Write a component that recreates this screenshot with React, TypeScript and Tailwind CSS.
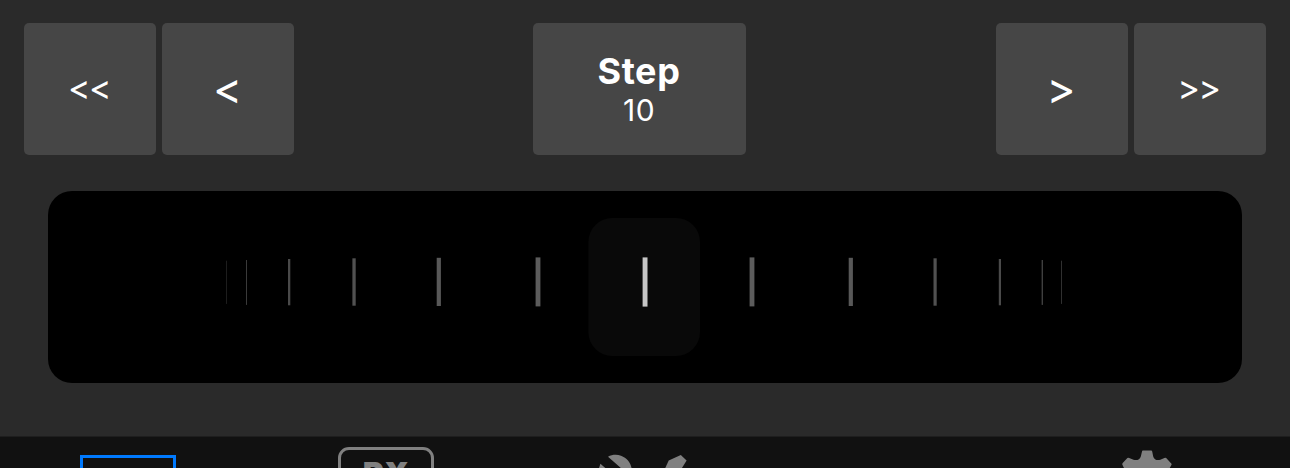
import type { ReactNode } from "react";

type Tick = { x: number; w: number; y: number; h: number; fill: string };

const ticks: Tick[] = [
  { x: 226, w: 1, y: 260.7, h: 43.2, fill: "#1d1d1d" },
  { x: 246, w: 1, y: 260, h: 44.9, fill: "#3a3a3a" },
  { x: 288, w: 2.3, y: 259, h: 46.3, fill: "#4a4a4a" },
  { x: 352.4, w: 3.3, y: 258.3, h: 47.4, fill: "#515151" },
  { x: 436.7, w: 4.2, y: 257.8, h: 48.2, fill: "#585858" },
  { x: 535.6, w: 4.8, y: 257.4, h: 49, fill: "#5c5c5c" },
  { x: 642.6, w: 4.9, y: 257.4, h: 49.2, fill: "#c6c6c6" },
  { x: 749.6, w: 4.8, y: 257.4, h: 49, fill: "#5c5c5c" },
  { x: 848.7, w: 4.2, y: 257.8, h: 48.2, fill: "#585858" },
  { x: 933.5, w: 3.2, y: 258.3, h: 47.4, fill: "#515151" },
  { x: 998.8, w: 2.2, y: 259, h: 46.3, fill: "#4a4a4a" },
  { x: 1041.6, w: 1.4, y: 260, h: 44.9, fill: "#3f3f3f" },
  { x: 1061, w: 1, y: 260.7, h: 43.2, fill: "#303030" },
];

function Key({ label, children }: { label: string; children: ReactNode }) {
  return (
    <button
      aria-label={label}
      className="flex size-[132px] items-center justify-center rounded-[5px] bg-[#464646] leading-none"
    >
      {children}
    </button>
  );
}

export default function App() {
  return (
    <div className="flex h-[468px] w-[1290px] flex-col overflow-hidden bg-[#2a2a2a] font-['Inter',sans-serif] text-white">
      <div className="mt-[23px] grid grid-cols-[1fr_213px_1fr] pr-6 pl-[24px]">
        <div className="flex gap-1.5">
          <Key label="Fast back">
            <span className="pr-[2px] pb-[3px] text-[34px] tracking-[-1.5px]">&lt;&lt;</span>
          </Key>
          <Key label="Back">
            <span className="pr-px pb-[3px] text-[44px]">&lt;</span>
          </Key>
        </div>
        <button className="-ml-[5.5px] flex h-[132px] w-[213px] flex-col items-center justify-center rounded-[5px] bg-[#464646]">
          <span className="pr-px text-[36px] leading-[42px] font-bold tracking-[0.6px]">Step</span>
          <span className="pr-px text-[30px] leading-[36px] tracking-[0.4px]">10</span>
        </button>
        <div className="flex justify-end gap-1.5">
          <Key label="Forward">
            <span className="pr-0.5 pb-[3px] text-[44px]">&gt;</span>
          </Key>
          <Key label="Fast forward">
            <span className="pr-[3px] pb-[3px] text-[34px] tracking-[-1.5px]">&gt;&gt;</span>
          </Key>
        </div>
      </div>

      <div className="mx-12 mt-9 h-48 shrink-0 overflow-hidden rounded-[24px] bg-black">
        <svg className="block h-48 w-[1194px]" viewBox="48 191 1194 192">
          <rect x="588.4" y="218" width="111.6" height="138" rx="24" fill="#090909" />
          {ticks.map((t) => (
            <rect key={t.x} x={t.x} y={t.y} width={t.w} height={t.h} fill={t.fill} />
          ))}
        </svg>
      </div>

      <nav className="mt-[53px] flex h-8 shrink-0 items-start overflow-hidden border-t border-[#1e1e1e] bg-[#111111]">
        <div className="mt-[18px] ml-20 h-24 w-24 shrink-0 border-[3px] border-[#007aff]" />
        <div className="mt-2.5 ml-[162px] flex h-24 w-24 shrink-0 justify-center rounded-[11px] border-[3px] border-[#808080] pt-2 text-[32px] leading-[32px] font-black text-[#808080]">
          RX
        </div>
        <svg className="mt-[9px] ml-[158px] h-[22px] w-[104px] shrink-0" viewBox="592 446 104 22" fill="#808080">
          <path d="M608 456.7C612 454.6 617 454.3 621 455.8C627 458 631 463 631.7 469H622Z" />
          <path d="M600.4 463.8L606.5 469H598.7Z" />
          <path d="M668.7 460.6L680.8 455L686.6 460.4L681.3 469H664.8Z" />
        </svg>
        <svg className="mt-[9px] ml-[422px] h-[22px] w-[56px] shrink-0" viewBox="1118 446 56 22" fill="#808080">
          <path d="M1142.8 450.5H1151.2Q1152 450.5 1152.2 451.5L1153.2 456.4C1154 459.4 1157 460.7 1160.3 459.7L1164.4 457.9Q1165.5 457.4 1166.2 458.1L1171 463.2Q1172 464 1171.4 465L1169.2 469H1124.5L1122.5 465Q1122 464 1122.7 463L1127.4 458.1Q1128.2 457.4 1129.2 457.9L1133.5 459.7C1137 460.7 1140 459.4 1140.8 456.4L1142 451.4Q1142.2 450.5 1142.8 450.5Z" />
        </svg>
      </nav>
    </div>
  );
}
